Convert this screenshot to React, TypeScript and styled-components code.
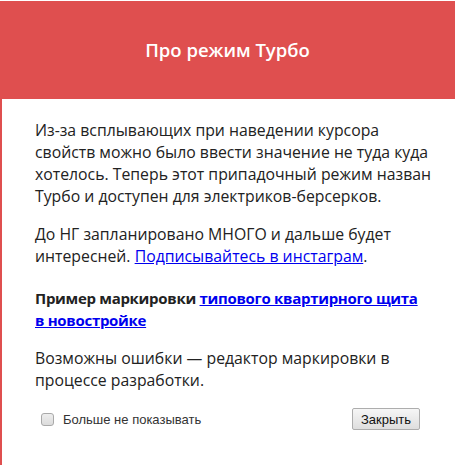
import React from "react";
import styled, { createGlobalStyle } from "styled-components";

const Global = createGlobalStyle`
  html, body { margin: 0; padding: 0; background: #ffffff; }
  body { font-family: "Open Sans", "Noto Sans", sans-serif; }
`;

const Dialog = styled.div`
  width: 455px;
  height: 465px;
  box-sizing: border-box;
  padding-top: 1px;
  background: #ffffff;
  display: flex;
  flex-direction: column;
  overflow: hidden;
`;

const Header = styled.div`
  height: 98px;
  background: #df4f4f;
  display: flex;
  align-items: center;
  justify-content: center;
  color: #ffffff;
  font-family: "Open Sans", sans-serif;
  font-weight: 600;
  font-size: 18.5px;
  padding-bottom: 2px;
  box-sizing: border-box;
`;

const Body = styled.div`
  flex: 1;
  border-left: 2px solid #df4f4f;
  padding: 20px 30px 0 33px;
  color: #222222;
  font-family: "Open Sans", sans-serif;
  font-size: 15.8px;
  line-height: 22px;
`;

const Para = styled.p<{ $bold?: boolean }>`
  margin: ${(p) => (p.$bold ? "20px 0 16px" : "0 0 16px")};
  white-space: nowrap;
  font-weight: ${(p) => (p.$bold ? 700 : 400)};
  font-size: ${(p) => (p.$bold ? "15px" : "inherit")};
  letter-spacing: ${(p) => (p.$bold ? "-0.3px" : "normal")};
`;

const Link = styled.a`
  color: #0000ee;
  text-decoration: underline;
`;

const Footer = styled.div`
  display: flex;
  align-items: center;
  justify-content: space-between;
  margin-top: 17px;
  padding-left: 6px;
  padding-right: 5px;
  font-family: "Liberation Sans", Arial, sans-serif;
  font-size: 13px;
  line-height: normal;
  color: #333333;
`;

const CheckLabel = styled.label`
  display: flex;
  align-items: center;
  gap: 9px;
`;

const Box = styled.span`
  width: 11px;
  height: 11px;
  border: 1px solid #a9a9a9;
  border-radius: 3px;
  background: linear-gradient(#ededed, #dcdcdc);
`;

const Button = styled.button`
  height: 22px;
  padding: 0 8px;
  border: 1px solid #adadad;
  border-radius: 2px;
  background: linear-gradient(#f6f6f6, #dedede);
  font-family: "Liberation Sans", Arial, sans-serif;
  font-size: 13px;
  color: #111111;
`;

export default function App() {
  return (
    <>
      <Global />
      <Dialog>
        <Header>Про режим Турбо</Header>
        <Body>
          <Para>
            Из-за всплывающих при наведении курсора
            <br />
            свойств можно было ввести значение не туда куда
            <br />
            хотелось. Теперь этот припадочный режим назван
            <br />
            Турбо и доступен для электриков-берсерков.
          </Para>
          <Para>
            До НГ запланировано МНОГО и дальше будет
            <br />
            интересней. <Link href="#">Подписывайтесь в инстаграм</Link>.
          </Para>
          <Para $bold>
            Пример маркировки{" "}
            <Link href="#">
              типового квартирного щита
              <br />в новостройке
            </Link>
          </Para>
          <Para>
            Возможны ошибки — редактор маркировки в
            <br />
            процессе разработки.
          </Para>
          <Footer>
            <CheckLabel>
              <Box />
              Больше не показывать
            </CheckLabel>
            <Button>Закрыть</Button>
          </Footer>
        </Body>
      </Dialog>
    </>
  );
}
